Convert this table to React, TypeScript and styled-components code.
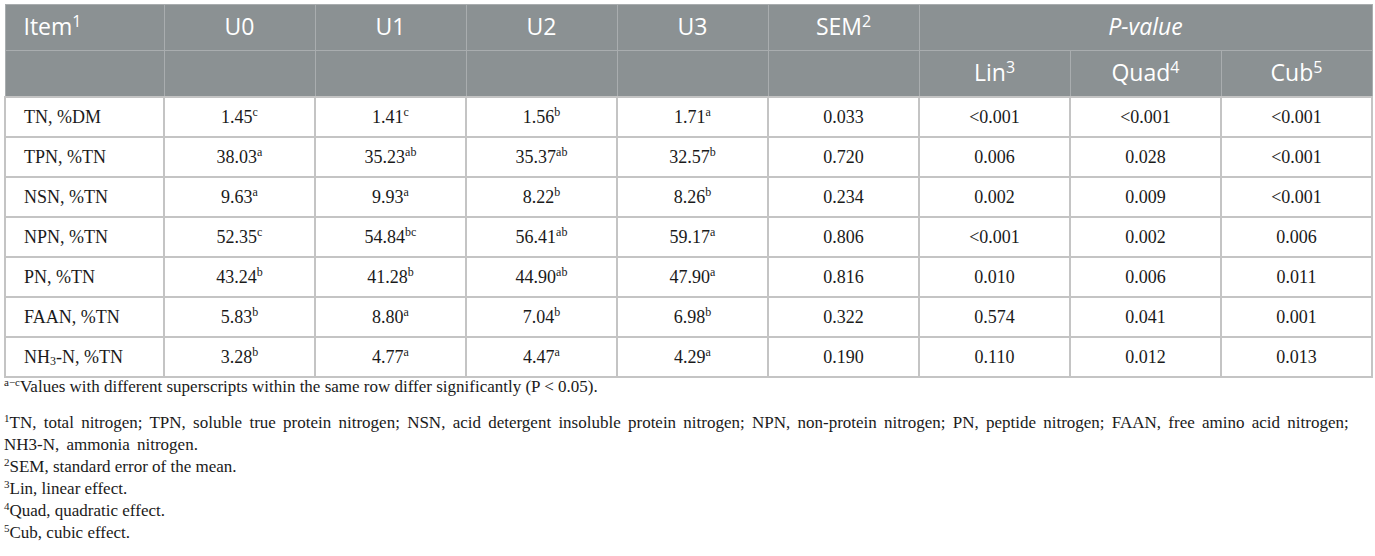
import React from "react";
import styled, { createGlobalStyle } from "styled-components";

const GlobalStyle = createGlobalStyle`
  html, body { margin: 0; padding: 0; background: #ffffff; }
  body { padding: 4px 3px 0 4px; }
`;

const Wrapper = styled.div`
  width: 1368px;
`;

const Table = styled.table`
  width: 1368px;
  border-collapse: collapse;
  table-layout: fixed;
`;

const HeadCell = styled.th<{ $align?: "left" | "center"; $italic?: boolean }>`
  background: #8b9193;
  color: #ffffff;
  font-family: "Open Sans", "Lato", sans-serif;
  font-weight: 400;
  font-size: 23px;
  font-style: ${(p) => (p.$italic ? "italic" : "normal")};
  height: 46px;
  box-sizing: border-box;
  padding: 0 0 2px 0;
  text-align: ${(p) => p.$align ?? "center"};
  padding-left: ${(p) => (p.$align === "left" ? "18px" : "0")};
  border: 1px solid #a9adaf;
  vertical-align: middle;
  line-height: 1;
`;

const HeadSup = styled.sup`
  font-size: 16px;
  vertical-align: 8px;
  line-height: 0;
`;

const Cell = styled.td<{ $align?: "left" | "center" }>`
  font-family: "Liberation Serif", "Times New Roman", serif;
  font-size: 18px;
  color: #1a1a1a;
  height: 38px;
  padding: 0;
  padding-left: ${(p) => (p.$align === "left" ? "18px" : "0")};
  text-align: ${(p) => p.$align ?? "center"};
  border: 2px solid #c4c4c4;
  vertical-align: middle;
  line-height: 1;
`;

const Sup = styled.sup`
  font-size: 12px;
  vertical-align: 7px;
  line-height: 0;
`;

const Sub = styled.sub`
  font-size: 12px;
  vertical-align: -2px;
  line-height: 0;
`;

const Notes = styled.div`
  margin-top: -2px;
  font-family: "Liberation Serif", "Times New Roman", serif;
  font-size: 17px;
  color: #1a1a1a;
  line-height: 22px;
`;

const Note = styled.p<{ $gap?: number; $spread?: number }>`
  margin: 0 0 ${(p) => p.$gap ?? 0}px 0;
  word-spacing: ${(p) => p.$spread ?? 0}px;
`;

const NoteSup = styled.sup`
  font-size: 11px;
  vertical-align: 6px;
  line-height: 0;
`;

type Row = { item: React.ReactNode; vals: [string, string][]; sem: string; p: string[] };

const rows: Row[] = [
  { item: "TN, %DM", vals: [["1.45", "c"], ["1.41", "c"], ["1.56", "b"], ["1.71", "a"]], sem: "0.033", p: ["<0.001", "<0.001", "<0.001"] },
  { item: "TPN, %TN", vals: [["38.03", "a"], ["35.23", "ab"], ["35.37", "ab"], ["32.57", "b"]], sem: "0.720", p: ["0.006", "0.028", "<0.001"] },
  { item: "NSN, %TN", vals: [["9.63", "a"], ["9.93", "a"], ["8.22", "b"], ["8.26", "b"]], sem: "0.234", p: ["0.002", "0.009", "<0.001"] },
  { item: "NPN, %TN", vals: [["52.35", "c"], ["54.84", "bc"], ["56.41", "ab"], ["59.17", "a"]], sem: "0.806", p: ["<0.001", "0.002", "0.006"] },
  { item: "PN, %TN", vals: [["43.24", "b"], ["41.28", "b"], ["44.90", "ab"], ["47.90", "a"]], sem: "0.816", p: ["0.010", "0.006", "0.011"] },
  { item: "FAAN, %TN", vals: [["5.83", "b"], ["8.80", "a"], ["7.04", "b"], ["6.98", "b"]], sem: "0.322", p: ["0.574", "0.041", "0.001"] },
  {
    item: (
      <>
        NH<Sub>3</Sub>-N, %TN
      </>
    ),
    vals: [["3.28", "b"], ["4.77", "a"], ["4.47", "a"], ["4.29", "a"]],
    sem: "0.190",
    p: ["0.110", "0.012", "0.013"],
  },
];

export default function App() {
  return (
    <Wrapper>
      <GlobalStyle />
      <Table>
        <colgroup>
          <col style={{ width: 159 }} />
          {Array.from({ length: 8 }).map((_, i) => (
            <col key={i} style={{ width: 151 }} />
          ))}
        </colgroup>
        <thead>
          <tr>
            <HeadCell $align="left">
              Item<HeadSup>1</HeadSup>
            </HeadCell>
            <HeadCell>U0</HeadCell>
            <HeadCell>U1</HeadCell>
            <HeadCell>U2</HeadCell>
            <HeadCell>U3</HeadCell>
            <HeadCell>
              SEM<HeadSup>2</HeadSup>
            </HeadCell>
            <HeadCell colSpan={3} $italic>
              P-value
            </HeadCell>
          </tr>
          <tr>
            <HeadCell />
            <HeadCell />
            <HeadCell />
            <HeadCell />
            <HeadCell />
            <HeadCell />
            <HeadCell>
              Lin<HeadSup>3</HeadSup>
            </HeadCell>
            <HeadCell>
              Quad<HeadSup>4</HeadSup>
            </HeadCell>
            <HeadCell>
              Cub<HeadSup>5</HeadSup>
            </HeadCell>
          </tr>
        </thead>
        <tbody>
          {rows.map((r, i) => (
            <tr key={i}>
              <Cell $align="left">{r.item}</Cell>
              {r.vals.map(([v, s], j) => (
                <Cell key={j}>
                  {v}
                  <Sup>{s}</Sup>
                </Cell>
              ))}
              <Cell>{r.sem}</Cell>
              {r.p.map((p, j) => (
                <Cell key={j}>{p}</Cell>
              ))}
            </tr>
          ))}
        </tbody>
      </Table>
      <Notes>
        <Note $gap={14}>
          <NoteSup>a−c</NoteSup>Values with different superscripts within the same row differ significantly (P &lt; 0.05).
        </Note>
        <Note $spread={3}>
          <NoteSup>1</NoteSup>TN, total nitrogen; TPN, soluble true protein nitrogen; NSN, acid detergent insoluble protein
          nitrogen; NPN, non-protein nitrogen; PN, peptide nitrogen; FAAN, free amino acid nitrogen; NH3-N, ammonia
          nitrogen.
        </Note>
        <Note>
          <NoteSup>2</NoteSup>SEM, standard error of the mean.
        </Note>
        <Note>
          <NoteSup>3</NoteSup>Lin, linear effect.
        </Note>
        <Note>
          <NoteSup>4</NoteSup>Quad, quadratic effect.
        </Note>
        <Note>
          <NoteSup>5</NoteSup>Cub, cubic effect.
        </Note>
      </Notes>
    </Wrapper>
  );
}
